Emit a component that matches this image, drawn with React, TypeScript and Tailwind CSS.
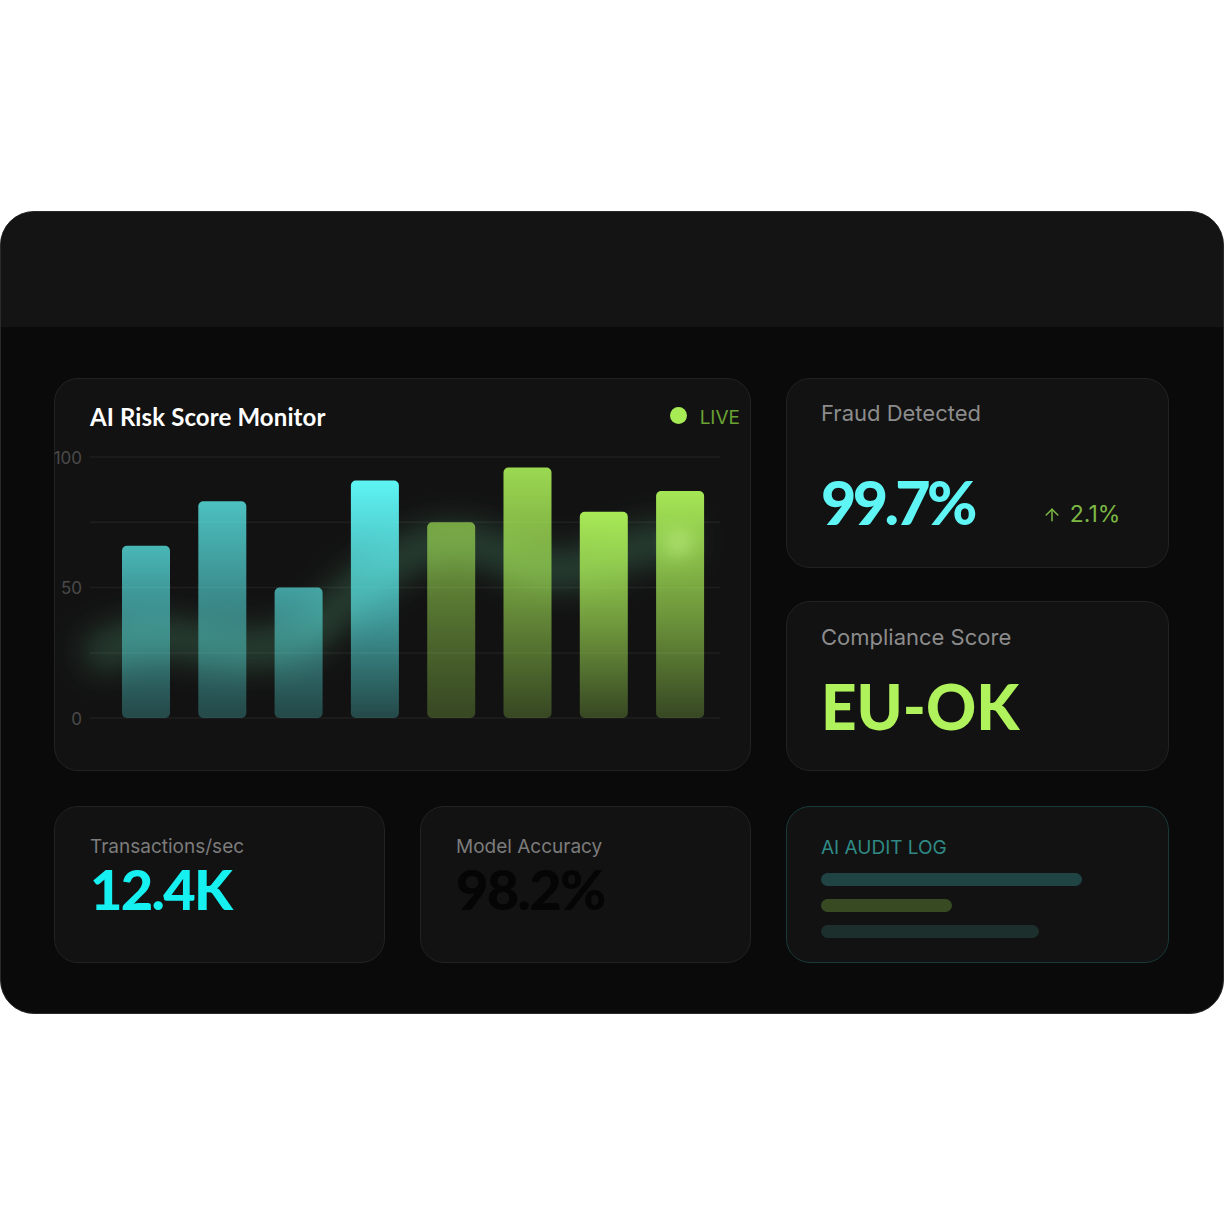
import { ArrowUp } from "lucide-react";

const HEAD = { fontFamily: "Lato, 'Open Sans', sans-serif" };
const BODY = { fontFamily: "Inter, 'Noto Sans', sans-serif" };

const CYAN = "#5ef4f4";
const LIME = "#abef58";

interface Bar {
  value: number;
  color: string;
  top: number;
}

const BARS: Bar[] = [
  { value: 66, color: CYAN, top: 0.73 },
  { value: 83, color: CYAN, top: 0.77 },
  { value: 50, color: CYAN, top: 0.63 },
  { value: 91, color: CYAN, top: 1 },
  { value: 75, color: LIME, top: 0.64 },
  { value: 96, color: LIME, top: 0.9 },
  { value: 79, color: LIME, top: 0.98 },
  { value: 87, color: LIME, top: 0.96 },
];

// chart geometry, in svg units (svg origin sits at page x=50, y=445)
const BASE_Y = 272;
const SCALE = 2.61;
const GRID = [11, 76.3, 141.6, 207, 272];

function RiskChart() {
  return (
    <svg width={674} height={285} className="-ml-[40px] mt-[15px] block overflow-visible">
      <defs>
        {BARS.map((b, i) => (
          <linearGradient key={i} id={`bar-${i}`} x1="0" y1="0" x2="0" y2="1">
            <stop offset="0%" stopColor={b.color} stopOpacity={b.top} />
            <stop offset="55%" stopColor={b.color} stopOpacity={b.top * 0.62} />
            <stop offset="100%" stopColor={b.color} stopOpacity={0.24} />
          </linearGradient>
        ))}
        <filter id="glow" x="-20%" y="-50%" width="140%" height="200%">
          <feGaussianBlur stdDeviation="16" />
        </filter>
        <filter id="spot" x="-100%" y="-100%" width="300%" height="300%">
          <feGaussianBlur stdDeviation="8" />
        </filter>
      </defs>

      {GRID.map((y) => (
        <line key={y} x1={40} x2={670} y1={y} y2={y} stroke="#1f1f1f" strokeWidth={1.5} />
      ))}

      <g style={BODY} fill="#4a4a4a" fontSize={17} textAnchor="end">
        <text x={32} y={18}>100</text>
        <text x={32} y={148}>50</text>
        <text x={32} y={279}>0</text>
      </g>

      <path
        d="M 40 215 C 120 150, 200 250, 280 170 S 400 80, 470 115 S 570 80, 640 100"
        fill="none"
        stroke="#6fd6a0"
        strokeOpacity={0.25}
        strokeWidth={36}
        filter="url(#glow)"
      />

      {BARS.map((b, i) => {
        const h = b.value * SCALE;
        return (
          <rect
            key={i}
            x={72 + i * 76.3}
            y={BASE_Y - h}
            width={48}
            height={h}
            rx={5}
            fill={`url(#bar-${i})`}
          />
        );
      })}

      <circle cx={629} cy={97} r={14} fill="#d6ff9a" opacity={0.35} filter="url(#spot)" />
    </svg>
  );
}

function Card({
  children,
  className = "",
}: {
  children: React.ReactNode;
  className?: string;
}) {
  return (
    <div className={`rounded-[24px] border border-[#222222] bg-[#121212] ${className}`}>
      {children}
    </div>
  );
}

export default function App() {
  return (
    <div className="flex h-[1224px] w-full items-center bg-white">
      <div className="w-full overflow-hidden rounded-[34px] border border-[#2a2a2a] bg-[#0a0a0a]">
        <div className="h-[115px] bg-[#141414]" />

        <div className="grid grid-cols-[331px_331px_383px] gap-[35px] px-[53px] pb-[50px] pt-[51px]">
          {/* risk monitor */}
          <Card className="col-span-2 h-[393px] pl-[35px] pr-[10px] pt-[24px]">
            <div className="flex items-start justify-between">
              <h2 style={HEAD} className="text-[24px] font-bold leading-[28px] tracking-[0.005em] text-white">
                AI Risk Score Monitor
              </h2>
              <div className="flex items-center gap-[13px] pt-[2px]">
                <span className="h-[17px] w-[17px] rounded-full bg-[#a8ec55]" />
                <span style={BODY} className="mt-[3px] text-[19px] leading-none text-[#6aa232]">
                  LIVE
                </span>
              </div>
            </div>
            <RiskChart />
          </Card>

          {/* right column */}
          <div className="flex h-[393px] flex-col gap-[33px]">
            <Card className="h-[190px] px-[34px] pt-[19px]">
              <p style={BODY} className="text-[22px] leading-[30px] text-[#8c8c8c]">
                Fraud Detected
              </p>
              <div className="mt-[43px] flex items-baseline">
                <span
                  style={HEAD}
                  className="text-[61px] font-black leading-none tracking-[-0.06em] text-[#5ff5f5]"
                >
                  99.7%
                </span>
                <span
                  style={BODY}
                  className="ml-[68px] flex items-center gap-[8px] text-[23px] leading-none text-[#7cb843]"
                >
                  <ArrowUp size={20} strokeWidth={1.8} />
                  2.1%
                </span>
              </div>
            </Card>
            <Card className="flex-1 px-[34px] pt-[20px]">
              <p style={BODY} className="text-[22px] leading-[30px] text-[#8c8c8c]">
                Compliance Score
              </p>
              <p
                style={HEAD}
                className="mt-[23px] text-[62px] font-black leading-none text-[#b0f25c]"
              >
                EU-OK
              </p>
            </Card>
          </div>

          {/* bottom row */}
          <Card className="h-[157px] px-[35px] pt-[28px]">
            <p style={BODY} className="text-[19px] leading-[24px] text-[#7c7c7c]">
              Transactions/sec
            </p>
            <p style={HEAD} className="mt-[2px] text-[56px] font-black leading-none tracking-[-0.03em] text-[#17f0f0]">
              12.4K
            </p>
          </Card>
          <Card className="h-[157px] px-[35px] pt-[28px]">
            <p style={BODY} className="text-[19px] leading-[24px] text-[#7c7c7c]">
              Model Accuracy
            </p>
            <p style={HEAD} className="mt-[2px] text-[56px] font-black leading-none tracking-[-0.03em] text-[#050505]">
              98.2%
            </p>
          </Card>
          <div className="h-[157px] rounded-[24px] border border-[#1a3939] bg-[#121212] px-[34px] pt-[28px]">
            <p style={BODY} className="text-[19px] leading-[26px] text-[#2f8a85]">
              AI AUDIT LOG
            </p>
            <div className="mt-[12px] flex flex-col gap-[13px]">
              <div className="h-[13px] w-[261px] rounded-full bg-[#1f4443]" />
              <div className="h-[13px] w-[131px] rounded-full bg-[#384a22]" />
              <div className="h-[13px] w-[218px] rounded-full bg-[#1c2f2d]" />
            </div>
          </div>
        </div>
      </div>
    </div>
  );
}
